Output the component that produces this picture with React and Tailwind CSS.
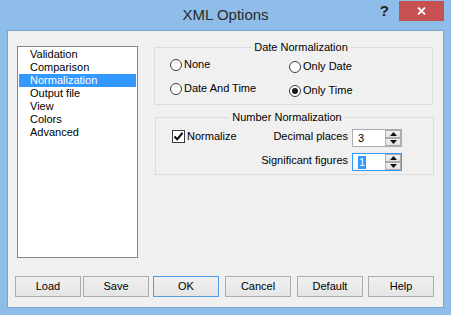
import React from 'react';

const items = ['Validation', 'Comparison', 'Normalization', 'Output file', 'View', 'Colors', 'Advanced'];

function GroupBox({ title, className, children }) {
  return (
    <fieldset className={`border border-[#dcdcdc] ${className}`}>
      <legend align="center" className="mx-auto px-[3px] leading-[13px]">{title}</legend>
      {children}
    </fieldset>
  );
}

function Radio({ label, checked }) {
  return (
    <div className="flex items-center gap-[2px] h-[13px]">
      <span className="w-[12px] h-[12px] rounded-full border border-[#3c3c3c] bg-white flex items-center justify-center">
        {checked && <span className="w-[6px] h-[6px] rounded-full bg-[#1a1a1a]" />}
      </span>
      <span className="leading-[13px]">{label}</span>
    </div>
  );
}

function Arrow({ up }) {
  return (
    <div className="flex-1 border border-[#acacac] bg-gradient-to-b from-[#f2f2f2] to-[#e2e2e2] flex items-center justify-center">
      <svg width="7" height="4" viewBox="0 0 7 4">
        <path d={up ? 'M0 4 L3.5 0 L7 4 Z' : 'M0 0 L3.5 4 L7 0 Z'} fill="#111" />
      </svg>
    </div>
  );
}

function SpinBox({ value, focused }) {
  return (
    <div className={`w-[50px] h-[18px] flex border bg-white ${focused ? 'border-[#3399ff]' : 'border-[#abadb3]'}`}>
      <div className="flex-1 pl-[5px] leading-[16px]">
        {focused ? <span className="bg-[#3399ff] text-white inline-block leading-[13px] px-[1px]">{value}</span> : value}
      </div>
      <div className="w-[16px] flex flex-col">
        <Arrow up />
        <Arrow />
      </div>
    </div>
  );
}

function Btn({ label, primary, className }) {
  return (
    <button
      className={`w-[66px] h-[21px] border bg-gradient-to-b from-[#f0f0f0] to-[#e5e5e5] text-black leading-[19px] text-center ${primary ? 'border-[#4f9de6]' : 'border-[#acacac]'} ${className}`}
    >
      {label}
    </button>
  );
}

export default function App() {
  return (
    <div className="w-[451px] h-[315px] bg-[#8fbde9] flex flex-col px-[7px] pb-[7px] font-['Liberation_Sans',Arial,sans-serif] text-[11px] text-black">
      {/* title bar */}
      <div className="h-[30px] flex items-start">
        <div className="flex-1" />
        <div className="text-[15px] leading-[30px] text-[#2b2b2b]">XML Options</div>
        <div className="flex-1 flex justify-end items-start pt-[1px]">
          <span className="text-[15px] font-bold leading-[20px] text-[#222] mr-[10px]">?</span>
          <div className="w-[45px] h-[20px] bg-[#c75050] flex items-center justify-center">
            <svg width="9" height="8" viewBox="0 0 9 8">
              <path d="M1 0.5 L8 7.5 M8 0.5 L1 7.5" stroke="#fff" strokeWidth="1.8" />
            </svg>
          </div>
        </div>
      </div>

      {/* client area */}
      <div className="flex-1 border border-[#7aa3cc] bg-[#f0f0f0] flex flex-col">
        <div className="flex items-start mt-[10px]">
          <div className="ml-[9px] mt-[5px] w-[121px] h-[212px] border border-[#828790] bg-white p-[1px]">
            {items.map((it) => (
              <div
                key={it}
                className={`h-[13px] leading-[13px] pl-[11px] ${it === 'Normalization' ? 'bg-[#3399ff] text-white' : ''}`}
              >
                {it}
              </div>
            ))}
          </div>

          <div className="ml-[16px] flex flex-col">
            <GroupBox title="Date Normalization" className="w-[279px] pl-[15px] pb-[7px]">
              <div className="grid grid-cols-[119px_1fr] gap-y-[9px] mt-[4px]">
                <Radio label="None" />
                <div className="mt-[2px]"><Radio label="Only Date" /></div>
                <Radio label="Date And Time" />
                <div className="mt-[2px]"><Radio label="Only Time" checked /></div>
              </div>
            </GroupBox>

            <GroupBox title="Number Normalization" className="w-[279px] ml-[1px] mt-[6px] pl-[16px] pr-[31px] pb-[3px]">
              <div className="flex items-start justify-between mt-[5px]">
                <div className="flex items-center gap-[2px] mt-[1px]">
                  <span className="w-[13px] h-[13px] border border-[#3c3c3c] bg-white flex items-center justify-center">
                    <svg width="11" height="11" viewBox="0 0 11 11">
                      <path d="M1.5 5.5 L4.2 8.3 L9.5 1.8" stroke="#000" strokeWidth="2" fill="none" />
                    </svg>
                  </span>
                  <span className="leading-[13px]">Normalize</span>
                </div>
                <div className="grid grid-cols-[auto_50px] gap-x-[4px] gap-y-[6px]">
                  <span className="text-right leading-[13px] pt-[1px]">Decimal places</span>
                  <SpinBox value="3" />
                  <span className="text-right leading-[13px] pt-[1px]">Significant figures</span>
                  <SpinBox value="1" focused />
                </div>
              </div>
            </GroupBox>
          </div>
        </div>

        <div className="flex mt-[18px]">
          <Btn label="Load" className="ml-[7px]" />
          <Btn label="Save" className="ml-[2px]" />
          <Btn label="OK" primary className="ml-[4px]" />
          <Btn label="Cancel" className="ml-[6px]" />
          <Btn label="Default" className="ml-[6px]" />
          <Btn label="Help" className="ml-[5px]" />
        </div>
      </div>
    </div>
  );
}
